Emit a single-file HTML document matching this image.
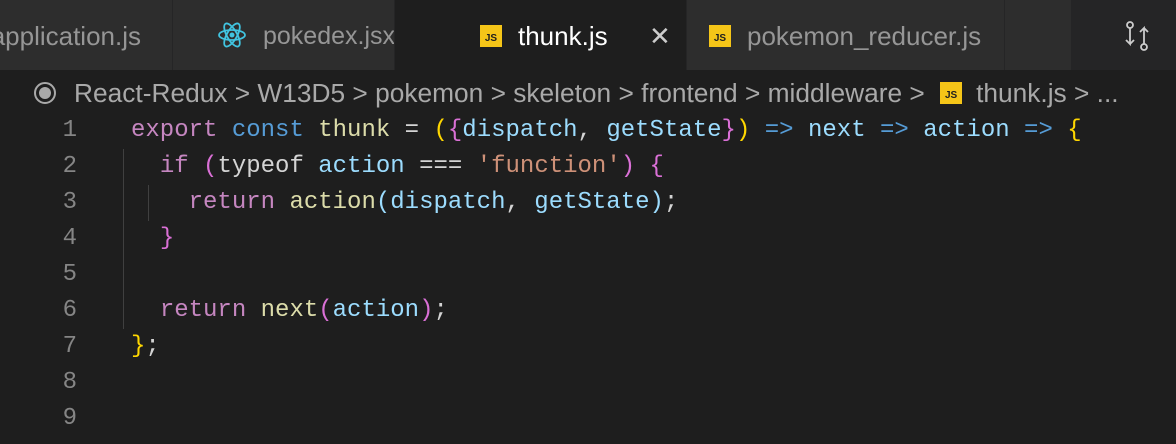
<!DOCTYPE html>
<html><head><style>
body{margin:0;width:1176px;height:444px;background:#1e1e1e;overflow:hidden;font-family:"Liberation Sans",sans-serif;position:relative}
.tabs{position:absolute;left:0;top:0;width:1176px;height:70px;background:#252526}
.tab{position:absolute;top:0;height:70px;background:#2d2d2d;color:#969696;font-size:26px;line-height:72px;border-right:1px solid #252526;box-sizing:border-box;white-space:nowrap;overflow:hidden}
.js{display:inline-block;width:22px;height:22px;background:#f5c518;color:#1e1e1e;font-size:10px;font-weight:bold;line-height:28px;text-align:center;vertical-align:middle;position:relative;top:-2px}
.bc{position:absolute;top:70px;left:0;width:1176px;height:46px;color:#a9a9a9;font-size:26.3px;line-height:46px}
.code{position:absolute;left:0;top:113px;font-family:"Liberation Mono",monospace;font-size:24px;color:#d4d4d4}
.ln{position:absolute;width:77px;text-align:right;color:#858585;height:36px;line-height:36px}
.l{position:absolute;left:131px;white-space:pre;height:36px;line-height:36px}
.k{color:#c586c0}.b{color:#569cd6}.f{color:#dcdcaa}.v{color:#9cdcfe}.s{color:#ce9178}.y{color:#ffd700}.p{color:#da70d6}
.g{position:absolute;width:1px;background:#404040}
</style></head><body>
<div class="tabs">
<div class="tab" style="left:0;width:173px;"><span style="position:absolute;right:31px">application.js</span></div>
<div class="tab" style="left:173px;width:222px;padding-left:44px"><svg width="30" height="30" viewBox="-15 -15 30 30" style="vertical-align:middle;position:relative;top:-3px"><g fill="none" stroke="#41c4e0" stroke-width="1.8"><ellipse rx="13" ry="5"/><ellipse rx="13" ry="5" transform="rotate(60)"/><ellipse rx="13" ry="5" transform="rotate(120)"/></g><circle r="2.5" fill="#41c4e0"/></svg><span style="position:absolute;left:90px;font-size:25px">pokedex.jsx</span></div>
<div class="tab" style="left:395px;width:292px;background:#1e1e1e;color:#fff;padding-left:85px"><span class="js">JS</span><span style="margin-left:16px">thunk.js</span><span style="position:absolute;left:254px;top:0;font-size:26px;color:#ccc">✕</span></div>
<div class="tab" style="left:687px;width:318px;padding-left:22px"><span class="js">JS</span><span style="margin-left:16px">pokemon_reducer.js</span></div>
<div class="tab" style="left:1005px;width:53px;padding-left:66px"><span class="js" style="position:absolute;left:66px;top:24px">JS</span></div>
<svg style="position:absolute;left:1122px;top:20px" width="30" height="32" viewBox="0 0 30 32" fill="none" stroke="#ccc" stroke-width="1.8"><circle cx="8" cy="5" r="3"/><path d="M8 8v16l-4-4M8 24l4-4"/><circle cx="22" cy="27" r="3"/><path d="M22 24V8l-4 4M22 8l4 4"/></svg>
</div>
<div class="bc"><svg style="position:absolute;left:33px;top:11px" width="24" height="24"><circle cx="12" cy="12" r="10" fill="none" stroke="#a9a9a9" stroke-width="2"/><circle cx="12" cy="12" r="6" fill="#a9a9a9"/></svg>
<span style="position:absolute;left:74px;white-space:nowrap">React-Redux &gt; W13D5 &gt; pokemon &gt; skeleton &gt; frontend &gt; middleware &gt; <span class="js" style="margin:0 14px 0 8px">JS</span>thunk.js &gt; ...</span></div>
<div class="code">
<div class="g" style="left:123px;top:36px;height:180px"></div>
<div class="g" style="left:148px;top:72px;height:36px"></div>
<div class="ln" style="top:0">1</div><div class="ln" style="top:36px">2</div><div class="ln" style="top:72px">3</div><div class="ln" style="top:108px">4</div><div class="ln" style="top:144px">5</div><div class="ln" style="top:180px">6</div><div class="ln" style="top:216px">7</div><div class="ln" style="top:252px">8</div><div class="ln" style="top:288px">9</div>
<div class="l" style="top:0"><span class="k">export</span> <span class="b">const</span> <span class="f">thunk</span> = <span class="y">(</span><span class="p">{</span><span class="v">dispatch</span>, <span class="v">getState</span><span class="p">}</span><span class="y">)</span> <span class="b">=&gt;</span> <span class="v">next</span> <span class="b">=&gt;</span> <span class="v">action</span> <span class="b">=&gt;</span> <span class="y">{</span></div>
<div class="l" style="top:36px">  <span class="k">if</span> <span class="p">(</span>typeof <span class="v">action</span> === <span class="s">'function'</span><span class="p">)</span> <span class="p">{</span></div>
<div class="l" style="top:72px">    <span class="k">return</span> <span class="f">action</span><span class="v">(dispatch</span>, <span class="v">getState</span><span class="v">)</span>;</div>
<div class="l" style="top:108px">  <span class="p">}</span></div>
<div class="l" style="top:180px">  <span class="k">return</span> <span class="f">next</span><span class="p">(</span><span class="v">action</span><span class="p">)</span>;</div>
<div class="l" style="top:216px"><span class="y">}</span>;</div>
</div>
</body></html>
